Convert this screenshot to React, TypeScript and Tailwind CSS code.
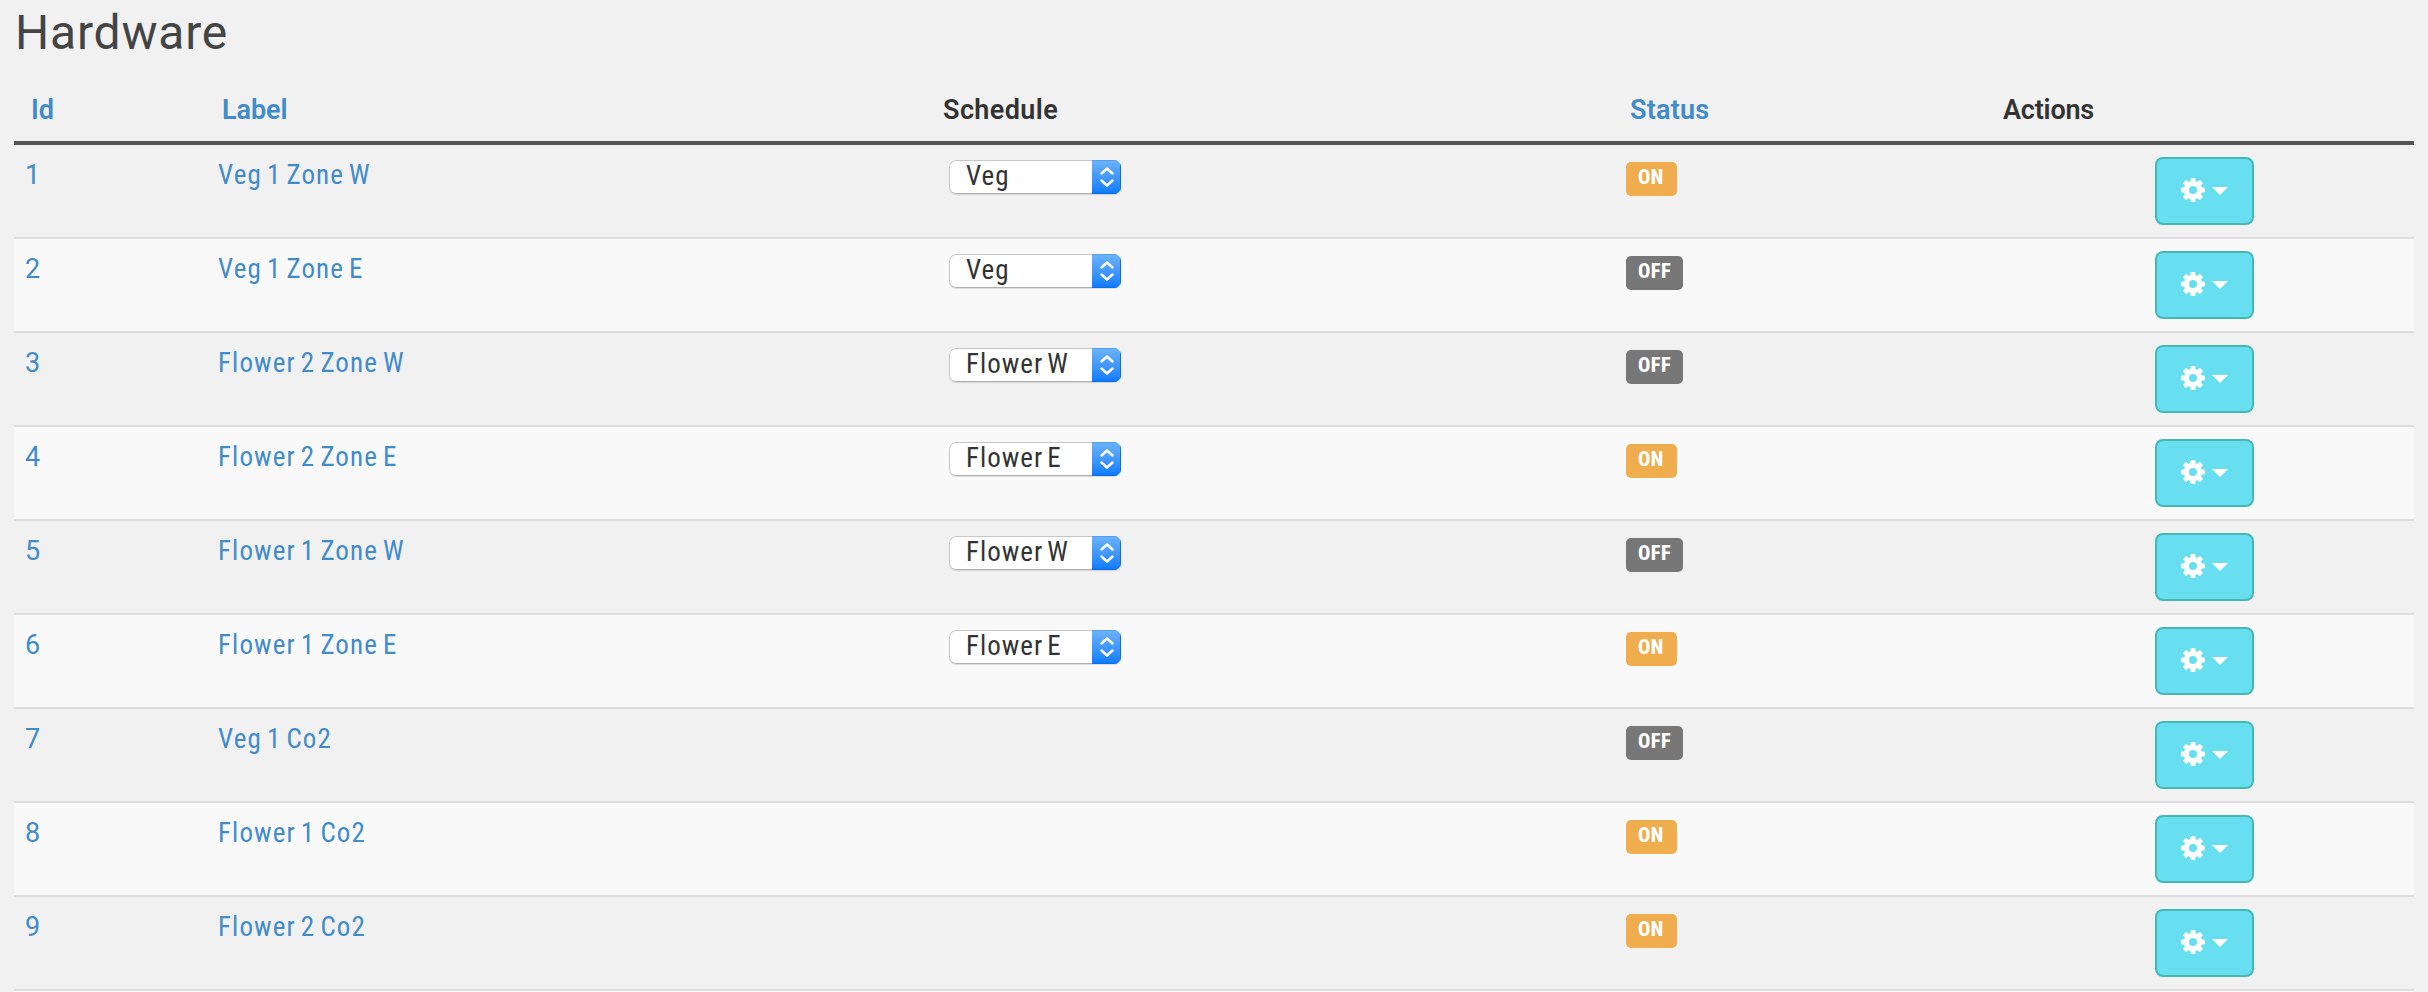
type Device = { id: number; label: string; schedule?: string; on: boolean };

const devices: Device[] = [
  { id: 1, label: "Veg 1 Zone W", schedule: "Veg", on: true },
  { id: 2, label: "Veg 1 Zone E", schedule: "Veg", on: false },
  { id: 3, label: "Flower 2 Zone W", schedule: "Flower W", on: false },
  { id: 4, label: "Flower 2 Zone E", schedule: "Flower E", on: true },
  { id: 5, label: "Flower 1 Zone W", schedule: "Flower W", on: false },
  { id: 6, label: "Flower 1 Zone E", schedule: "Flower E", on: true },
  { id: 7, label: "Veg 1 Co2", on: false },
  { id: 8, label: "Flower 1 Co2", on: true },
  { id: 9, label: "Flower 2 Co2", on: true },
];

const columns = "grid grid-cols-[192px_722px_686px_373px_427px]";
const teeth = [0, 45, 90, 135, 180, 225, 270, 315];

function Gear() {
  return (
    <svg className="h-6 w-6" viewBox="0 0 24 24" fill="#fff">
      <circle cx="12" cy="12" r="6.6" fill="none" stroke="#fff" strokeWidth="5.2" />
      {teeth.map((angle) => (
        <path key={angle} d="M9.3 4.5 9.7 0.3Q9.7 0 10 0H14Q14.3 0 14.3 0.3L14.7 4.5Z" transform={`rotate(${angle} 12 12)`} />
      ))}
    </svg>
  );
}

function ScheduleSelect({ value }: { value: string }) {
  return (
    <button className="ml-[21px] mt-[15px] flex h-[34px] w-[172px] overflow-hidden rounded-[7px] bg-white shadow-[0_1px_1px_rgba(0,0,0,0.12)]">
      <span className="h-[34px] flex-1 whitespace-nowrap rounded-l-[7px] border border-r-0 border-[#c6c6c6] border-b-[#b0b0b0] pl-4 text-left font-['Roboto_Condensed','Roboto',sans-serif] text-[27px] leading-[30px] tracking-[1px] [word-spacing:-3px] text-[#333]">
        {value}
      </span>
      <span className="flex h-[34px] w-[29px] items-center justify-center bg-linear-to-b from-[#6cb3fa] to-[#067aff] shadow-[inset_-1px_-1px_0_#0a6cf0,inset_0_1px_0_#4fa0f5]">
        <svg className="h-[22px] w-4" viewBox="0 0 16 22" fill="none" stroke="#fff" strokeWidth="2.4" strokeLinecap="round" strokeLinejoin="round">
          <path d="M2.5 7.5 8 2.5l5.5 5M2.5 14.5 8 19.5l5.5-5" />
        </svg>
      </span>
    </button>
  );
}

function Row({ device }: { device: Device }) {
  return (
    <div className={`${columns} h-[94px] border-b-2 border-[#ddd] odd:bg-[#f1f1f1] even:bg-[#f9f9f9]`}>
      <a className="pl-[11px] pt-[11px] leading-[38px] text-[#428bca]">{device.id}</a>
      <a className="pl-3 pt-[11px] font-['Roboto_Condensed','Roboto',sans-serif] font-[450] leading-[38px] tracking-[1.1px] [word-spacing:-2.2px] text-[#428bca]">
        {device.label}
      </a>
      <div>{device.schedule && <ScheduleSelect value={device.schedule} />}</div>
      <div className="pl-3 pt-[17px]">
        <span
          className={`flex h-[34px] items-start rounded-[5px] pl-3 font-['Roboto_Condensed','Roboto',sans-serif] text-[20.5px] font-extrabold leading-[31px] tracking-[0.5px] text-white ${device.on ? "w-[51px] bg-[#f0ad4e]" : "w-[57px] bg-[#777]"}`}
        >
          {device.on ? "ON" : "OFF"}
        </span>
      </div>
      <div className="pl-[168px] pt-3">
        <button className="flex h-[68px] w-[99px] items-center gap-[7px] rounded-lg border-2 border-[#46b8b3] bg-[#67dff0] pb-[2px] pl-6">
          <Gear />
          <svg className="mt-[2px] h-2 w-4" viewBox="0 0 16 8" fill="#fff">
            <path d="M0 0h16L8 8z" />
          </svg>
        </button>
      </div>
    </div>
  );
}

export default function App() {
  return (
    <main className="h-[992px] overflow-hidden bg-[#f1f1f1] px-[14px] font-['Roboto',sans-serif] text-[27px]">
      <h1 className="h-[91px] pl-px pt-[3px] text-[48px] leading-[60px] tracking-[0.8px] text-[#444]">Hardware</h1>
      <div className={`${columns} h-[54px] border-b-4 border-[#555] font-semibold leading-[38px] text-[#333]`}>
        <a className="pl-[17px] text-[#428bca]">Id</a>
        <a className="pl-4 tracking-[-0.1px] text-[#428bca]">Label</a>
        <span className="pl-[15px] tracking-[0.4px]">Schedule</span>
        <a className="pl-4 tracking-[0.2px] text-[#428bca]">Status</a>
        <span className="pl-4 tracking-[-0.2px]">Actions</span>
      </div>
      <div>
        {devices.map((device) => (
          <Row key={device.id} device={device} />
        ))}
        <div className="h-[94px] bg-[#f9f9f9]" />
      </div>
    </main>
  );
}
